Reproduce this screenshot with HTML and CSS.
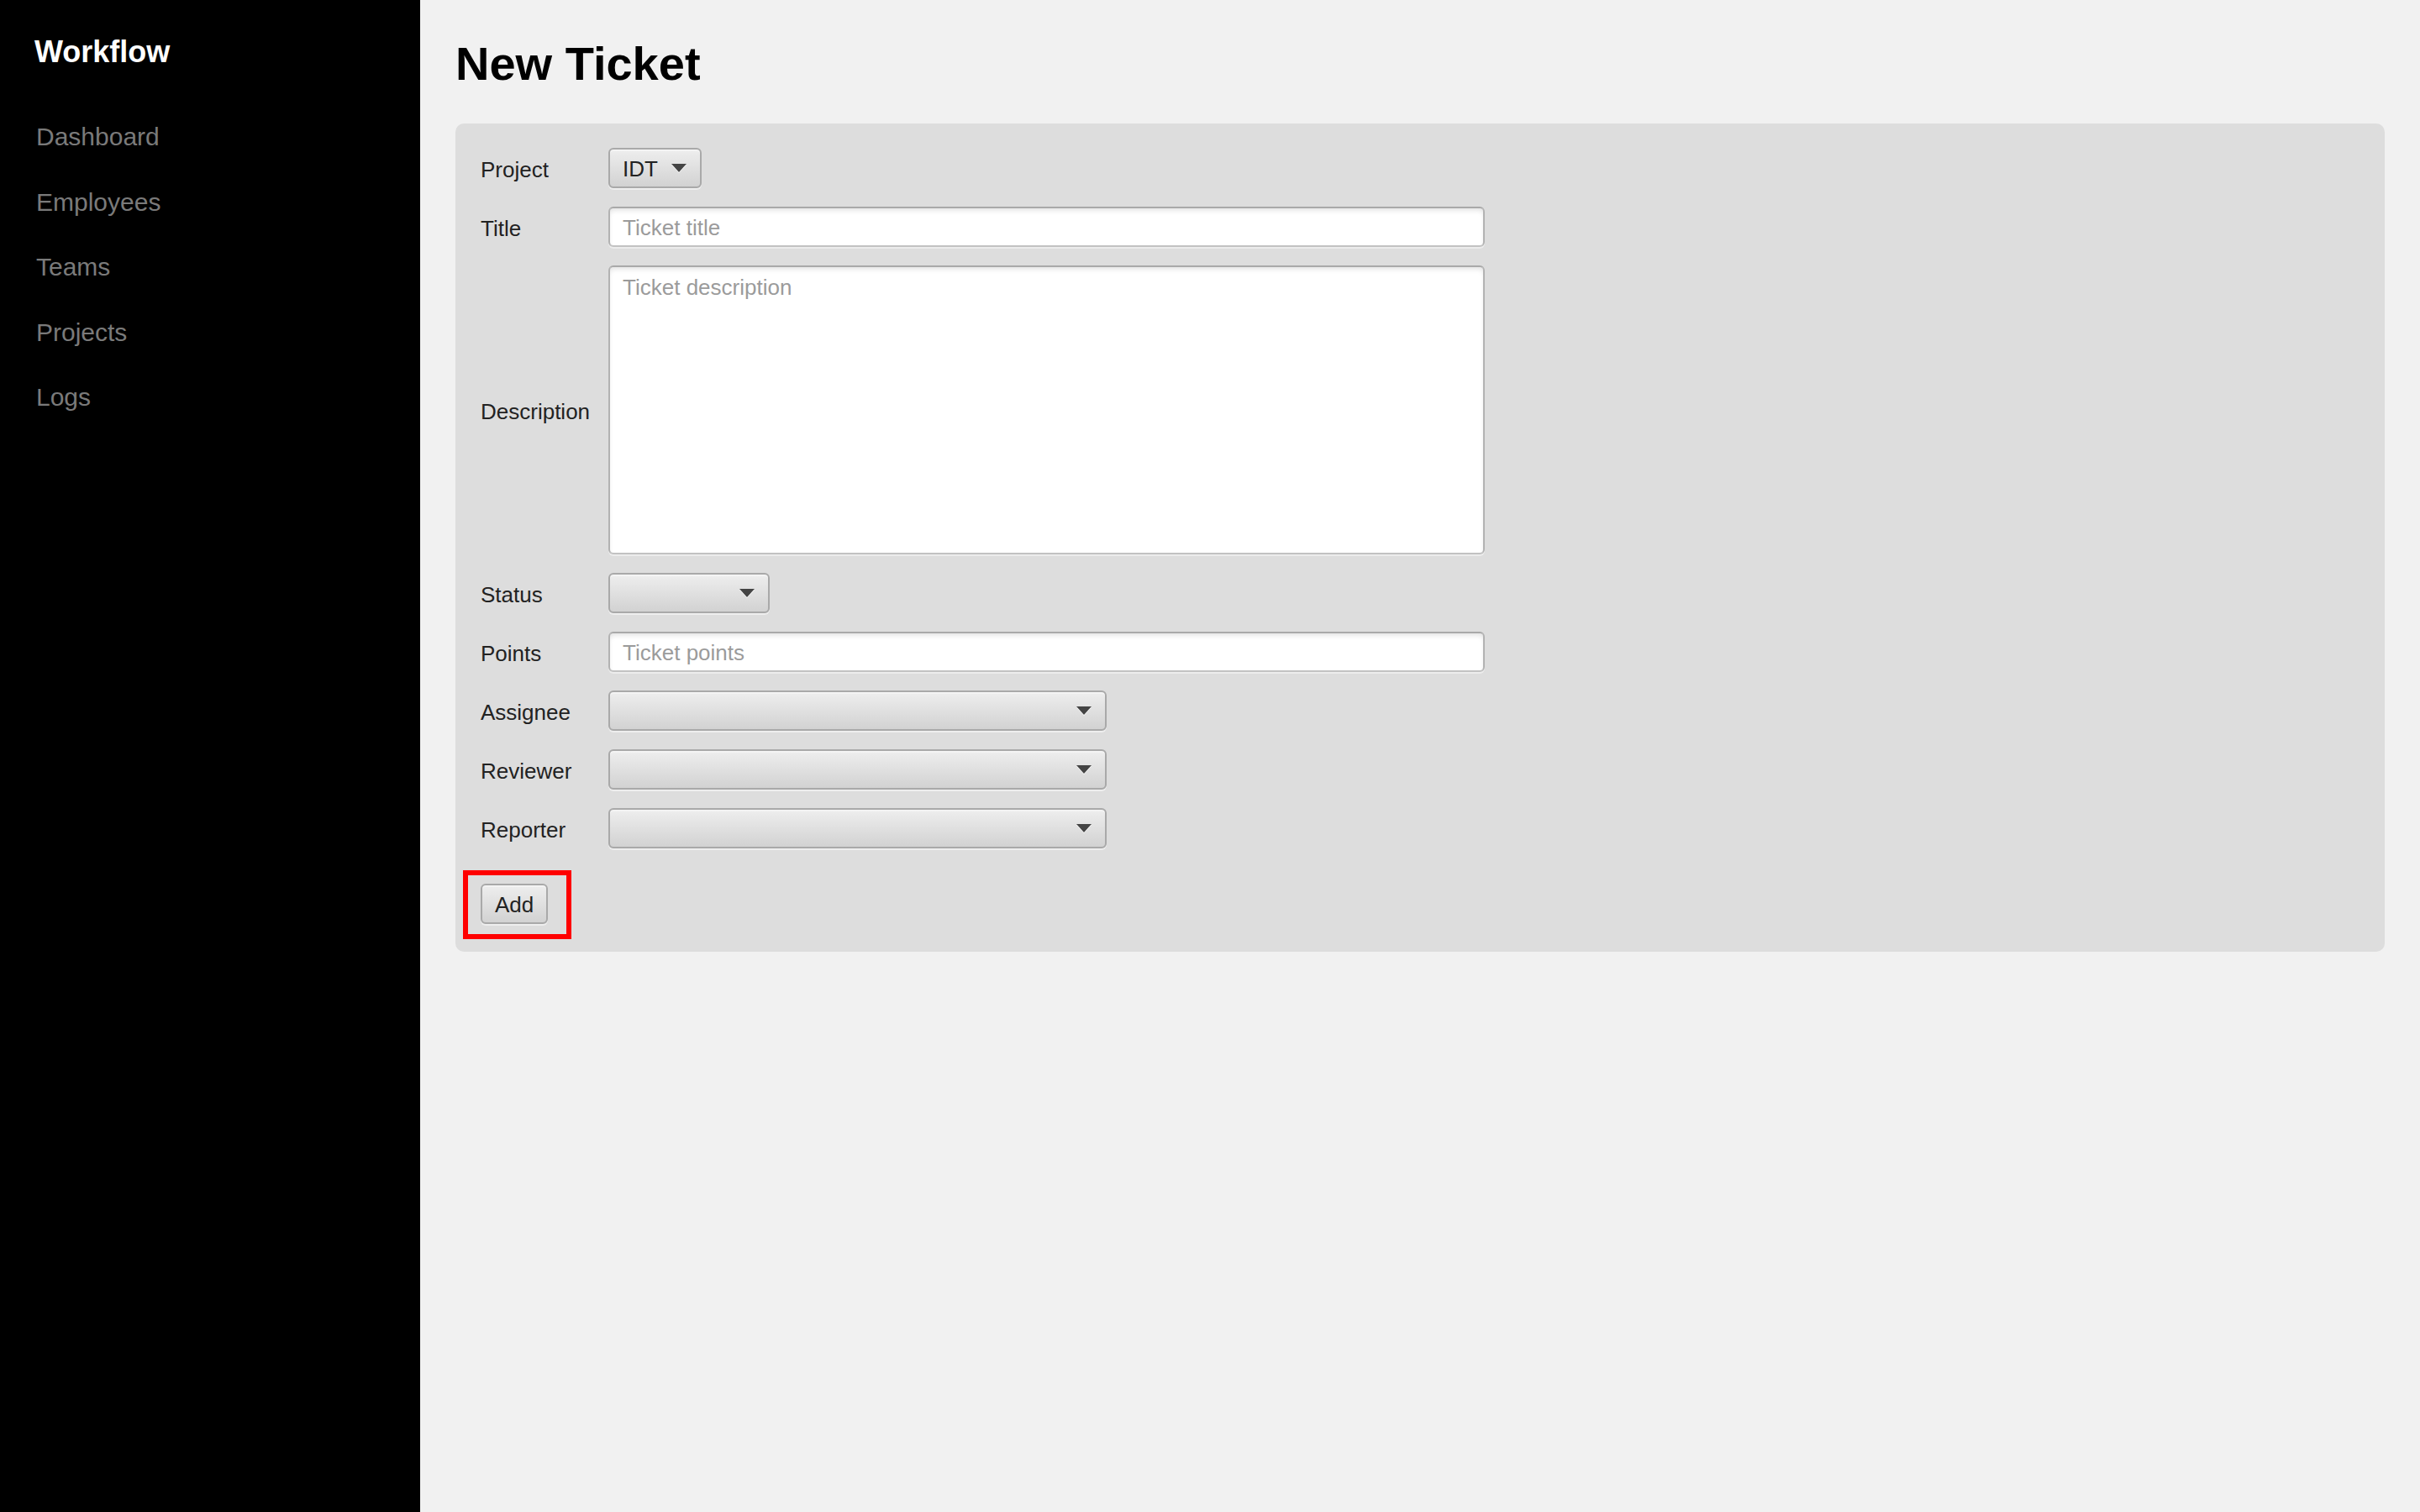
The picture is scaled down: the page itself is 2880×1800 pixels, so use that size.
FILE: index.html
```html
<!DOCTYPE html>
<html lang="en">
<head>
<meta charset="utf-8">
<title>New Ticket</title>
<link rel="stylesheet" href="styles.css">
</head>
<body>
<div class="app">
  <aside class="sidebar">
    <div class="brand">Workflow</div>
    <nav class="nav">
      <a class="nav-item">Dashboard</a>
      <a class="nav-item">Employees</a>
      <a class="nav-item">Teams</a>
      <a class="nav-item">Projects</a>
      <a class="nav-item">Logs</a>
    </nav>
  </aside>
  <main class="main">
    <h1 class="page-title">New Ticket</h1>
    <form class="panel">
      <div class="form-grid">
        <label class="field-label">Project</label>
        <div class="select select-project"><span class="select-value">IDT</span><svg class="caret" width="18" height="10" viewBox="0 0 18 10"><path d="M0 0H18L9 10Z"/></svg></div>

        <label class="field-label">Title</label>
        <div class="input input-wide"><span class="placeholder">Ticket title</span></div>

        <label class="field-label">Description</label>
        <div class="input textarea input-wide"><span class="placeholder">Ticket description</span></div>

        <label class="field-label">Status</label>
        <div class="select select-status"><svg class="caret" width="18" height="10" viewBox="0 0 18 10"><path d="M0 0H18L9 10Z"/></svg></div>

        <label class="field-label">Points</label>
        <div class="input input-wide"><span class="placeholder">Ticket points</span></div>

        <label class="field-label">Assignee</label>
        <div class="select select-person"><svg class="caret" width="18" height="10" viewBox="0 0 18 10"><path d="M0 0H18L9 10Z"/></svg></div>

        <label class="field-label">Reviewer</label>
        <div class="select select-person"><svg class="caret" width="18" height="10" viewBox="0 0 18 10"><path d="M0 0H18L9 10Z"/></svg></div>

        <label class="field-label">Reporter</label>
        <div class="select select-person"><svg class="caret" width="18" height="10" viewBox="0 0 18 10"><path d="M0 0H18L9 10Z"/></svg></div>
      </div>
      <div class="actions">
        <button type="button" class="btn btn-highlight">Add</button>
      </div>
    </form>
  </main>
</div>
</body>
</html>
```

FILE: styles.css
```css
* { box-sizing: border-box; }

html, body {
  margin: 0;
  padding: 0;
  height: 100%;
}

body {
  font-family: "Liberation Sans", Arial, sans-serif;
  background: #f1f1f1;
  color: #222;
}

.app {
  display: flex;
  min-height: 1800px;
}

.sidebar {
  width: 500px;
  flex: 0 0 500px;
  background: #000;
  padding: 41px 0 0 41px;
}

.brand {
  color: #fff;
  font-weight: bold;
  font-size: 36px;
  line-height: 41px;
  margin-bottom: 42px;
}

.nav {
  display: flex;
  flex-direction: column;
  padding-left: 2px;
}

.nav-item {
  color: #7a7a7a;
  font-size: 30px;
  line-height: 77.5px;
  text-decoration: none;
}

.main {
  flex: 1;
  padding: 44px 42px 42px 42px;
}

.page-title {
  margin: 0 0 39px 0;
  font-size: 56px;
  line-height: 64px;
  font-weight: bold;
  color: #000;
}

.panel {
  background: #dddddd;
  border-radius: 10px;
  padding: 29px 28px 33px 28px;
}

.form-grid {
  display: grid;
  grid-template-columns: max-content max-content;
  column-gap: 22px;
  row-gap: 22px;
  align-items: center;
}

.field-label {
  font-size: 26px;
  color: #222;
  padding: 4px 0 0 2px;
}

.select {
  display: flex;
  align-items: center;
  height: 48px;
  border: 2px solid #a9a9a9;
  border-radius: 6px;
  background: linear-gradient(#eeeeee, #d2d2d2);
  box-shadow: 0 2px 0 #eeeeee, inset 0 2px 0 #f4f4f4;
  padding: 0 16px 0 15px;
  font-size: 26px;
  color: #222;
}

.select-project { width: 111px; }
.select-status { width: 192px; }
.select-person { width: 593px; }

.select-value {
  margin-right: 16px;
  padding-top: 2px;
}

.caret {
  margin-left: auto;
  fill: #444;
  filter: drop-shadow(0 1.5px 0 #ffffff);
  flex: 0 0 auto;
}

.input {
  display: flex;
  align-items: center;
  height: 48px;
  background: #fff;
  border: 2px solid #b2b2b2;
  border-top-color: #a9a9a9;
  border-bottom-color: #c2c2c2;
  border-radius: 6px;
  box-shadow: inset 0 4px 6px -2px rgba(0, 0, 0, 0.13), 0 2px 0 #ececec;
  padding: 2px 15px 0 15px;
  font-size: 26px;
}

.input-wide { width: 1043px; }

.textarea {
  height: 344px;
  align-items: flex-start;
  padding-top: 9px;
}

.placeholder {
  color: #9b9b9b;
  line-height: 30px;
}

.actions {
  margin-top: 42px;
  display: flex;
}

.btn {
  height: 48px;
  padding: 2px 15px 0 15px;
  font-family: "Liberation Sans", Arial, sans-serif;
  font-size: 26px;
  color: #222;
  border: 2px solid #a9a9a9;
  border-radius: 6px;
  background: linear-gradient(#eeeeee, #d2d2d2);
  box-shadow: 0 2px 0 #eeeeee, inset 0 2px 0 #f4f4f4;
  margin-left: 2px;
}

.btn-highlight {
  position: relative;
}

.btn-highlight::after {
  content: "";
  position: absolute;
  top: -18px;
  left: -23px;
  right: -30px;
  bottom: -20px;
  border: 6px solid #ff0000;
  pointer-events: none;
}
```
